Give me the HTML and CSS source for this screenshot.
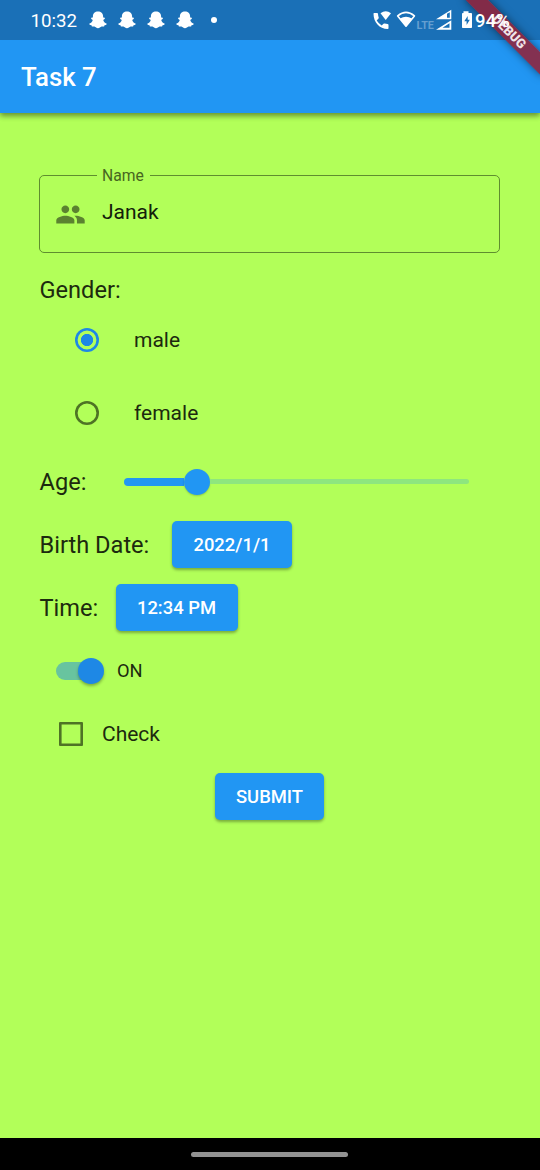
FILE: index.html
```html
<!DOCTYPE html>
<html lang="en">
<head>
<meta charset="utf-8">
<title>Task 7</title>
<link rel="stylesheet" href="styles.css">
</head>
<body>
<svg class="defs" width="0" height="0">
  <symbol id="ghost" viewBox="0 0 18 18"><path d="M9 0.4C6 .4 3.900 2.400 3.900 5V6.500C3.100 6.300 2 6.600 2.100 7.500C2.200 8.300 3.900 8.500 3.700 9.300C3.300 10.900 2.200 12 .6 12.500C0 12.800 .3 13.500 1.100 13.900L2.500 14.300L2.900 15.500L5.400 15.500C6.700 16.100 7.500 17.300 9 17.300S11.300 16.100 12.600 15.500L15.100 15.500L15.500 14.300L16.900 13.900C17.700 13.500 18 12.800 17.400 12.500C15.800 12 14.700 10.900 14.300 9.300C14.100 8.500 15.800 8.300 15.900 7.500C16 6.600 14.900 6.300 14.100 6.500V5C14.100 2.400 12 .4 9 .4Z"/></symbol>
</svg>
<header class="top">
  <div class="banner"><span>DEBUG</span></div>
  <div class="status">
    <span class="clock">10:32</span>
    <div class="notes">
      <svg><use href="#ghost"/></svg>
      <svg><use href="#ghost"/></svg>
      <svg><use href="#ghost"/></svg>
      <svg><use href="#ghost"/></svg>
    </div>
    <i class="dot"></i>
    <svg class="sys" viewBox="0 0 104 24">
      <path d="M4.100 5H7.100Q8 5 8 6Q8.100 7.900 8.700 9.500Q8.900 10 8.500 10.600L6.700 12.500Q8.700 15.700 11.700 17.600L13.500 15.800Q14 15.300 14.700 15.500L17.500 16Q18.500 16.200 18.500 17V20.300Q18.500 21 17.700 21C9.500 21 3.500 14 3.500 5.700Q3.500 5 4.100 5Z"/>
      <path d="M10.500 5.200Q15.800 1.300 21 5.200L15.700 12Z"/>
      <path class="line" d="M27.700 7.900Q36 .8 44.400 7.900L36 18.200Z"/>
      <path d="M30 10.600Q36 6.800 42 10.600L36 18.600Z"/>
      <text x="46.500" y="20.800">LTE</text>
      <path fill-rule="evenodd" d="M66 11.200L81.300 1.700V11.200ZM77 5.800V9.800H79.800V4.200Z"/>
      <path fill-rule="evenodd" d="M66 21.800L81.300 12.200V21.800ZM72.500 19.800H79.500V15.200Z"/>
      <path fill-rule="evenodd" d="M93.500 3.200H98.500V5H101.200Q102 5 102 6V19.200Q102 20 101.200 20H92.800Q92 20 92 19.200V6Q92 5 92.800 5H93.500ZM97.700 8L94.300 13.300H96.600V17L99.800 11.700H97.700Z"/>
    </svg>
    <span class="pct">94%</span>
  </div>
  <h1 class="title">Task 7</h1>
</header>
<main class="form">
  <fieldset class="field">
    <legend>Name</legend>
    <svg class="people" viewBox="0 0 24 24"><path d="M16 11c1.660 0 2.990-1.340 2.990-3S17.660 5 16 5s-3 1.340-3 3 1.340 3 3 3zm-8 0c1.660 0 2.990-1.340 2.990-3S9.660 5 8 5 5 6.340 5 8s1.340 3 3 3zm0 2c-2.330 0-7 1.170-7 3.500V19h14v-2.500c0-2.330-4.670-3.500-7-3.500zm8 0c-.29 0-.62.020-.97.050 1.160.84 1.970 1.970 1.970 3.450V19h6v-2.500c0-2.330-4.670-3.500-7-3.500z"/></svg>
    <span class="value">Janak</span>
  </fieldset>
  <div class="gender">Gender:</div>
  <div class="option"><i class="radio on"></i><span class="t-male">male</span></div>
  <div class="option"><i class="radio"></i><span class="t-female">female</span></div>
  <div class="row"><span class="label age">Age:</span><div class="slider"><i class="filled"></i><i class="thumb"></i><i class="rest"></i></div></div>
  <div class="row"><span class="label birth">Birth Date:</span><button class="btn date">2022/1/1</button></div>
  <div class="row"><span class="label time">Time:</span><button class="btn clockbtn">12:34 PM</button></div>
  <div class="row"><div class="switch"><i></i></div><span class="on-text">ON</span></div>
  <div class="row"><i class="check"></i><span class="check-text">Check</span></div>
  <div class="row center"><button class="btn submit">SUBMIT</button></div>
</main>
<footer class="nav"><i></i></footer>
</body>
</html>
```
FILE: styles.css
```css
* { box-sizing: border-box; }
body { margin: 0; width: 540px; height: 1170px; overflow: hidden; display: flex; flex-direction: column; background: #b2ff59; font-family: Roboto, "Liberation Sans", sans-serif; color: #1c2a0e; }
.defs { position: absolute; }
i { display: block; flex: none; }
span { white-space: nowrap; }

.top { position: relative; flex: none; height: 113px; background: #2196f3; box-shadow: 0 3px 5px rgba(0,0,0,.32), 0 1px 8px rgba(0,0,0,.2); clip-path: inset(0 0 -16px 0); }
.top::before { content: ""; position: absolute; inset: 0 0 auto; height: 40px; background: #1a70b7; }
.status { position: relative; display: flex; align-items: center; height: 40px; padding-left: 30.500px; color: #fff; z-index: 3; }
.clock { width: 58.500px; padding-top: 1px; font-size: 18.700px; }
.notes { display: flex; gap: 11px; }
.notes svg { width: 18px; height: 18px; fill: #fff; }
.dot { width: 6px; height: 6px; margin-left: 17px; border-radius: 50%; background: #fff; }
.sys { width: 104px; height: 24px; margin: 0 0 0 153px; fill: #fff; }
.sys .line { fill: none; stroke: #fff; stroke-width: 1.600; stroke-linejoin: round; }
.sys text { font-size: 10.800px; font-weight: 700; fill: #659fd0; }
.pct { padding-top: 1px; margin-left: 1px; font-size: 18.500px; font-weight: 500; letter-spacing: .1px; }
.title { position: relative; margin: 0; padding-left: 21px; font-size: 25.800px; line-height: 75px; font-weight: 500; color: #fff; }
.banner { position: absolute; z-index: 2; right: 0; top: 0; width: 90px; height: 90px; overflow: hidden; }
.banner span { position: absolute; left: 3.500px; top: 23.500px; width: 110px; height: 15.700px; transform: rotate(45deg); background: rgba(150,30,50,.84); box-shadow: 0 0 8px rgba(0,0,0,.5); color: #f0e4e8; font-size: 13px; line-height: 15.700px; font-weight: 900; text-align: center; }

.form { flex: 1; padding: 53px 39px 0; }
.field { display: flex; align-items: flex-start; height: 87px; width: 461px; margin: 0; padding: 0 0 0 15px; border: 1px solid #5f8e2f; border-radius: 5px; color: #000; }
.field legend { margin-left: 42px; padding: 0 6px 0 5px; font-size: 15.700px; line-height: 19px; color: #47661f; }
.people { width: 31px; height: 31px; margin-top: 14px; fill: #5b8230; }
.value { margin: 15px 0 0 16px; font-size: 21px; line-height: 25px; color: #13200a; }
.gender { height: 50px; padding-top: 23px; font-size: 23.600px; line-height: 28px; padding-left: .5px; }
.option { display: flex; align-items: center; height: 73.500px; padding-left: 35.500px; font-size: 21px; }
.option span { margin-left: 35.500px; }
.radio { width: 24px; height: 24px; border-radius: 50%; box-shadow: inset 0 0 0 2.600px #4e7325; }
.radio.on { box-shadow: inset 0 0 0 2.600px #1e88e5; background: radial-gradient(circle, #1e88e5 5.800px, transparent 6.400px); }
.row { display: flex; align-items: center; height: 63px; }
.center { justify-content: center; }
.label { font-size: 23.600px; line-height: 28px; padding-left: .5px; }
.age { width: 85px; }
.birth { width: 133px; }
.time { width: 76.500px; }
.slider { display: flex; align-items: center; width: 344.500px; }
.filled { width: 60px; height: 8px; border-radius: 4px 0 0 4px; background: #2196f3; }
.thumb { width: 26px; height: 26px; border-radius: 50%; background: #2196f3; box-shadow: 0 1px 2px rgba(0,0,0,.2); }
.rest { flex: 1; height: 5px; border-radius: 0 3px 3px 0; background: #8ee67e; }
.btn { height: 47px; margin: 0; padding: 0; border: 0; border-radius: 5px; background: #2196f3; box-shadow: 0 2px 3px rgba(0,0,0,.32); color: #fff; font: 500 18.400px/47px Roboto, sans-serif; }
.date { width: 120px; }
.clockbtn { width: 122px; }
.submit { width: 109px; margin-right: 1px; }
.switch { display: flex; justify-content: flex-end; align-items: center; width: 46px; height: 18px; margin-left: 17px; border-radius: 9px; background: #68c49f; }
.switch i { width: 26px; height: 26px; margin-right: -1.500px; border-radius: 50%; background: #1e88e5; box-shadow: 0 2px 3px rgba(0,0,0,.3); }
.on-text { margin-left: 15px; font-size: 18.300px; }
.check { width: 24px; height: 24px; margin-left: 20px; box-shadow: inset 0 0 0 2.600px #4e7325; border-radius: 1px; }
.check-text { margin-left: 19px; font-size: 21px; }
.nav { display: flex; justify-content: center; flex: none; height: 32px; padding: 14px 1px 0 0; background: #000; }
.nav i { width: 157px; height: 5px; border-radius: 3px; background: #929292; }
```
